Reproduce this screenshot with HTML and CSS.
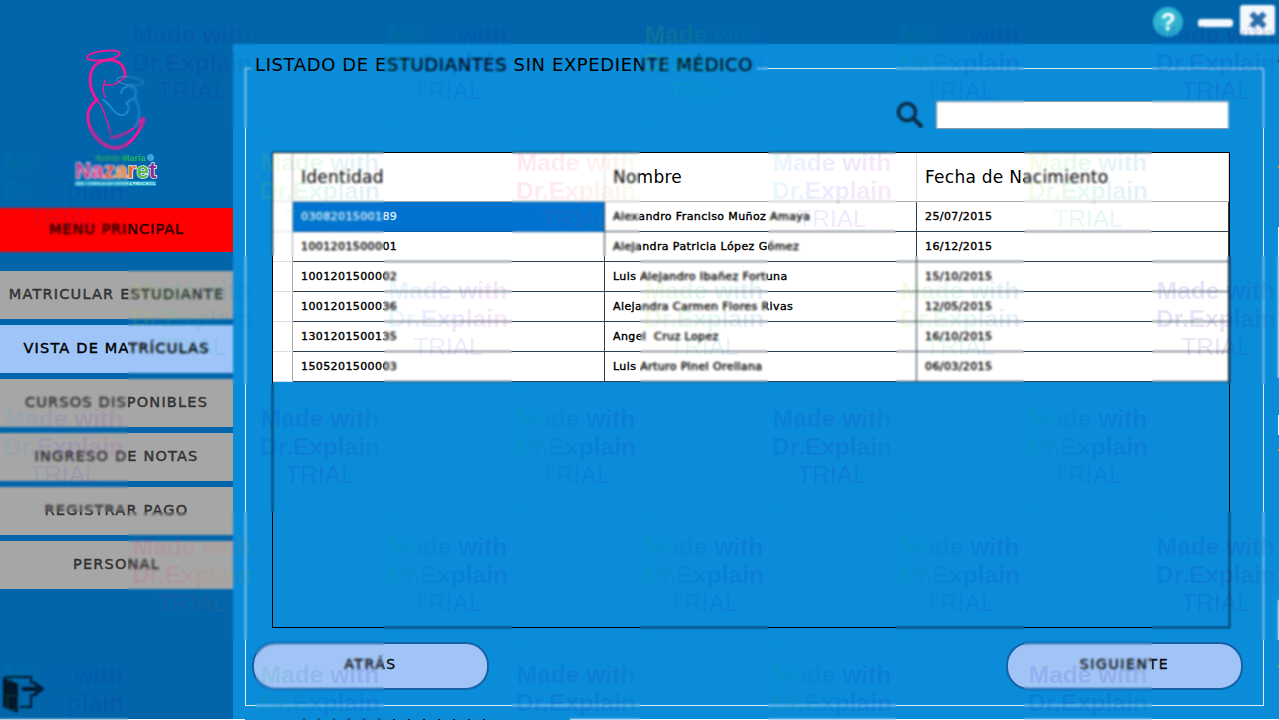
FILE: index.html
```html
<!DOCTYPE html>
<html lang="es">
<head>
<meta charset="utf-8">
<title>Listado de estudiantes sin expediente médico</title>
<link rel="stylesheet" href="styles.css">
</head>
<body>
<div class="app">
  <header class="topbar">
    <span class="help">?</span>
    <span class="minimize"></span>
    <span class="close">
      <svg viewBox="0 0 20 20" width="20" height="20"><path d="M3.5 3.5 16.5 16.5M16.5 3.5 3.5 16.5" class="close-x"/></svg>
    </span>
  </header>
  <div class="workspace">
    <aside class="sidebar">
      <svg class="logo" viewBox="70 45 95 145" width="95" height="145">
        <g class="logo-pink">
          <ellipse cx="103.500" cy="55.500" rx="16.500" ry="4.600" transform="rotate(-7 103.500 55.500)" class="mid"/>
          <path d="M125 77C126 66 118 59 108 60C97 61 90 68 90 80C90 90 94 96 97 100C90 105 87 112 88 120C90 132 100 146 114 148C127 149 139 135 144 119" class="thick"/>
          <path d="M97 100C103 106 106 118 111 134" class="thin"/>
          <path d="M111 138C122 136 135 130 142 118" class="mid"/>
          <path d="M104 84C110 87 119 84 125 76" class="thin"/>
          <path d="M105 80C102 88 103 95 106 98" class="thin"/>
        </g>
        <g class="logo-blue">
          <ellipse cx="130" cy="81" rx="13.500" ry="4" transform="rotate(8 130 81)" class="hair"/>
          <path d="M121 93C122 87 130 84 134 88C138 92 136 99 130 100L126 104" class="mid"/>
          <path d="M103 100C110 103 113 113 120 115C126 116 130 111 128 104" class="mid"/>
          <path d="M134 98C140 104 141 118 135 127" class="mid"/>
        </g>
        <text x="95" y="161" class="logo-santa">Santa María</text>
        <circle cx="150.500" cy="157.500" r="3.500" class="logo-de"/>
        <text x="75" y="178" class="logo-name"><tspan class="l1">N</tspan><tspan class="l2">a</tspan><tspan class="l3">z</tspan><tspan class="l4">a</tspan><tspan class="l5">r</tspan><tspan class="l6">e</tspan><tspan class="l7">t</tspan></text>
        <rect x="75" y="181" width="81" height="5" class="logo-band"/>
        <text x="115.500" y="185" class="logo-tag">EARLY STIMULATION CENTER &amp; PRESCHOOL</text>
      </svg>
      <div class="menu-title">MENU PRINCIPAL</div>
      <nav class="menu">
        <a class="menu-item">MATRICULAR ESTUDIANTE</a>
        <a class="menu-item active">VISTA DE MATRÍCULAS</a>
        <a class="menu-item">CURSOS DISPONIBLES</a>
        <a class="menu-item">INGRESO DE NOTAS</a>
        <a class="menu-item">REGISTRAR PAGO</a>
        <a class="menu-item">PERSONAL</a>
      </nav>
      <svg class="exit" viewBox="0 0 46 38" width="46" height="38">
        <path d="M3 1 18 8V37L3 31Z" class="exit-door"/>
        <path d="M5 1H31V8M31 18V31H20" class="exit-frame"/>
        <path d="M22 13H38" class="exit-arrow"/>
        <path d="M33 6 42 13 33 20" class="exit-head"/>
      </svg>
    </aside>
    <main class="panel">
      <fieldset class="group">
        <legend class="group-title">LISTADO DE ESTUDIANTES SIN EXPEDIENTE MÉDICO</legend>
        <div class="group-body">
          <div class="search">
            <svg viewBox="0 0 28 28" width="28" height="28"><circle cx="11" cy="11" r="8.500" class="lens"/><path d="M17 17 26 26" class="lens-handle"/></svg>
            <input class="search-input" type="text" aria-label="Buscar">
          </div>
          <div class="frame">
            <table class="grid">
              <thead>
                <tr><th class="stub"></th><th>Identidad</th><th>Nombre</th><th>Fecha de Nacimiento</th></tr>
              </thead>
              <tbody>
                <tr><td class="stub"></td><td class="selected">0308201500189</td><td>Alexandro Franciso Muñoz Amaya</td><td>25/07/2015</td></tr>
                <tr><td class="stub"></td><td>1001201500001</td><td>Alejandra Patricia López Gómez</td><td>16/12/2015</td></tr>
                <tr><td class="stub"></td><td>1001201500002</td><td>Luis Alejandro Ibañez Fortuna</td><td>15/10/2015</td></tr>
                <tr><td class="stub"></td><td>1001201500036</td><td>Alejandra Carmen Flores Rivas</td><td>12/05/2015</td></tr>
                <tr><td class="stub"></td><td>1301201500135</td><td>Angel&nbsp; Cruz Lopez</td><td>16/10/2015</td></tr>
                <tr><td class="stub"></td><td>1505201500003</td><td>Luis Arturo Pinel Orellana</td><td>06/03/2015</td></tr>
              </tbody>
            </table>
          </div>
          <div class="actions">
            <button class="action">ATRÁS</button>
            <button class="action">SIGUIENTE</button>
          </div>
        </div>
      </fieldset>
    </main>
    <div class="edge"></div>
  </div>
  <div class="strip"><span class="strip-a"></span><span class="strip-b"></span><span class="strip-c"></span></div>
</div>

<div class="watermarks" aria-hidden="true">
  <div class="wm-row odd">
    <div class="tile"><div class="mark g2">Made with<br>Dr.Explain<br><span>TRIAL</span></div></div>
    <div class="tile"><div class="mark g1">Made with<br>Dr.Explain<br><span>TRIAL</span></div></div>
    <div class="tile"><div class="mark g3">Made with<br>Dr.Explain<br><span>TRIAL</span></div></div>
    <div class="tile"><div class="mark g1">Made with<br>Dr.Explain<br><span>TRIAL</span></div></div>
    <div class="tile"><div class="mark g2">Made with<br>Dr.Explain<br><span>TRIAL</span></div></div>
  </div>
  <div class="wm-row">
    <div class="tile"><div class="mark g1">Made with<br>Dr.Explain<br><span>TRIAL</span></div></div>
    <div class="tile"><div class="mark g3">Made with<br>Dr.Explain<br><span>TRIAL</span></div></div>
    <div class="tile"><div class="mark g4">Made with<br>Dr.Explain<br><span>TRIAL</span></div></div>
    <div class="tile"><div class="mark g5">Made with<br>Dr.Explain<br><span>TRIAL</span></div></div>
    <div class="tile"><div class="mark g3">Made with<br>Dr.Explain<br><span>TRIAL</span></div></div>
  </div>
  <div class="wm-row odd">
    <div class="tile"><div class="mark g3">Made with<br>Dr.Explain<br><span>TRIAL</span></div></div>
    <div class="tile"><div class="mark g5">Made with<br>Dr.Explain<br><span>TRIAL</span></div></div>
    <div class="tile"><div class="mark g3">Made with<br>Dr.Explain<br><span>TRIAL</span></div></div>
    <div class="tile"><div class="mark g3">Made with<br>Dr.Explain<br><span>TRIAL</span></div></div>
    <div class="tile"><div class="mark g2">Made with<br>Dr.Explain<br><span>TRIAL</span></div></div>
  </div>
  <div class="wm-row">
    <div class="tile"><div class="mark g5">Made with<br>Dr.Explain<br><span>TRIAL</span></div></div>
    <div class="tile"><div class="mark g2">Made with<br>Dr.Explain<br><span>TRIAL</span></div></div>
    <div class="tile"><div class="mark g1">Made with<br>Dr.Explain<br><span>TRIAL</span></div></div>
    <div class="tile"><div class="mark g2">Made with<br>Dr.Explain<br><span>TRIAL</span></div></div>
    <div class="tile"><div class="mark g1">Made with<br>Dr.Explain<br><span>TRIAL</span></div></div>
  </div>
  <div class="wm-row odd">
    <div class="tile"><div class="mark g4">Made with<br>Dr.Explain<br><span>TRIAL</span></div></div>
    <div class="tile"><div class="mark g1">Made with<br>Dr.Explain<br><span>TRIAL</span></div></div>
    <div class="tile"><div class="mark g1">Made with<br>Dr.Explain<br><span>TRIAL</span></div></div>
    <div class="tile"><div class="mark g1">Made with<br>Dr.Explain<br><span>TRIAL</span></div></div>
    <div class="tile"><div class="mark g2">Made with<br>Dr.Explain<br><span>TRIAL</span></div></div>
  </div>
  <div class="wm-row">
    <div class="tile"><div class="mark g1">Made with<br>Dr.Explain<br><span>TRIAL</span></div></div>
    <div class="tile"><div class="mark g1">Made with<br>Dr.Explain<br><span>TRIAL</span></div></div>
    <div class="tile"><div class="mark g2">Made with<br>Dr.Explain<br><span>TRIAL</span></div></div>
    <div class="tile"><div class="mark g1">Made with<br>Dr.Explain<br><span>TRIAL</span></div></div>
    <div class="tile"><div class="mark g2">Made with<br>Dr.Explain<br><span>TRIAL</span></div></div>
  </div>
</div>
</body>
</html>
```
FILE: styles.css
```css
* { box-sizing: border-box; }
html, body { margin: 0; width: 1279px; height: 720px; overflow: hidden; }
body { position: relative; background: #0065ab; font-family: "DejaVu Sans", sans-serif; color: #000; }

.app { display: flex; flex-direction: column; height: 720px; }

.topbar { height: 44px; flex: none; display: flex; justify-content: flex-end; align-items: flex-start; }
.help { width: 30px; height: 30px; margin-top: 7px; border-radius: 50%; background: radial-gradient(circle at 45% 40%, #3cc4d6, #1f9fc8); color: #fff; font: 700 24px/30px "Liberation Sans", sans-serif; text-align: center; }
.minimize { width: 35px; height: 8px; margin: 19px 7px 0 15px; border-radius: 3px; background: #f4f8fd; }
.close { width: 35px; height: 30px; margin: 5px 4px 0 0; border-radius: 3px; background: #f2f7fc; display: flex; align-items: center; justify-content: center; }
.close-x { fill: none; stroke: #2a6da9; stroke-width: 6; }

.workspace { flex: 1; min-height: 0; display: flex; }

.sidebar { width: 233px; flex: none; margin-top: -44px; display: flex; flex-direction: column; position: relative; }
.logo { display: block; margin: 45px 0 0 70px; flex: none; }
.logo-pink, .logo-blue { fill: none; stroke-linecap: round; }
.logo-pink { stroke: #ec1a96; }
.logo-blue { stroke: #1b8ad0; }
.thick { stroke-width: 3; }
.mid { stroke-width: 2; }
.thin { stroke-width: 1.400; }
.logo-blue .hair { stroke-width: .8; stroke: #3d9bd8; }
.logo-santa { font: 700 9px "Liberation Sans", sans-serif; fill: #22b45c; }
.logo-de { fill: #3aa5dd; }
.logo-name { font: 700 22px "Liberation Sans", sans-serif; stroke: #e9f3f6; stroke-width: 1.500; paint-order: stroke; letter-spacing: .3px; }
.l1 { fill: #c5428f; }
.l2 { fill: #e33c8e; }
.l3 { fill: #e8534a; }
.l4 { fill: #f0823b; }
.l5 { fill: #f06a2a; }
.l6 { fill: #5db648; }
.l7 { fill: #93278f; }
.logo-band { fill: #13a3c9; }
.logo-tag { font: 700 3.600px "Liberation Sans", sans-serif; fill: #d8f2f7; text-anchor: middle; }

.menu-title { flex: none; height: 44px; margin-top: 18px; background: #ff0000; color: #2b0000; font: 400 14.500px/43px "DejaVu Sans", sans-serif; -webkit-text-stroke: .45px currentColor; letter-spacing: .95px; text-align: center; }
.menu { flex: none; margin-top: 19px; display: flex; flex-direction: column; gap: 6px; }
.menu-item { height: 48px; background: #a6a6a6; color: #333; font: 400 14.500px/46px "DejaVu Sans", sans-serif; -webkit-text-stroke: .45px currentColor; text-align: center; letter-spacing: 1.2px; }
.menu-item.active { background: #9fc5f8; color: #000; }

.exit { position: absolute; left: 0; top: 676px; }
.exit-door { fill: #04172a; }
.exit-frame { fill: none; stroke: #04172a; stroke-width: 2; }
.exit-arrow { fill: none; stroke: #04172a; stroke-width: 4; }
.exit-head { fill: none; stroke: #04172a; stroke-width: 3; }

.panel { width: 1045px; flex: none; background: #0a8cd9; padding: 10px 14px 13px 12px; }
.edge { width: 1px; flex: none; background: linear-gradient(180deg, #0a8cd9 0 16px, #111 16px 18px, #0a8cd9 18px 122px, #f5a100 122px 124px, #0a8cd9 124px 183px, #e9f3fa 183px 334px, #0a8cd9 334px 371px, #e9f3fa 371px 391px, #0a8cd9 391px 405px, #f5a100 405px 407px, #0a8cd9 407px 556px, #e9f3fa 556px 596px, #0a8cd9 596px 621px, #35d03a 621px 623px, #0a8cd9 623px); }

.group { display: block; width: 1019px; height: 652px; margin: 0; padding: 0; border: 1px solid #dcecf8; min-width: 0; }
.group-title { margin-left: 5px; padding: 0 4px 6px; font: 400 18px/22px "DejaVu Sans", sans-serif; color: #000; letter-spacing: .6px; }
.group-body { padding: 19px 20px 0 6px; }

.search { height: 28px; display: flex; justify-content: flex-end; align-items: center; gap: 12px; margin-right: 14px; }
.lens { fill: none; stroke: #0b2a45; stroke-width: 3.500; }
.lens-handle { fill: none; stroke: #0b2a45; stroke-width: 4; }
.search-input { width: 293px; height: 28px; border: 1px solid #8a9ba8; background: #fff; padding: 0; margin: 0; }

.frame { margin: 23px 13px 0 20px; height: 476px; border: 1px solid #000; }
.grid { width: 956px; table-layout: fixed; border-collapse: separate; border-spacing: 0; background: #fff; }
.grid th { height: 49px; padding: 0 0 0 8px; text-align: left; font: 400 17px/22px "DejaVu Sans", sans-serif; letter-spacing: .25px; color: #000; border-right: 1px solid #ddd; border-bottom: 1px solid #aaa; }
.grid td { height: 30px; padding: 0 0 0 8px; font: 400 11px/16px "DejaVu Sans", sans-serif; letter-spacing: .4px; -webkit-text-stroke: .4px currentColor; color: #000; border-right: 1px solid #2c3e50; border-bottom: 1px solid #2c3e50; white-space: nowrap; overflow: hidden; }
.grid .stub { width: 20px; padding: 0; border-right: 1px solid #aaa; border-bottom-color: #ddd; }
.grid td.selected { background: #0073d1; color: #d5e6f6; border-bottom-color: #0a5ba0; }

.actions { display: flex; justify-content: space-between; margin-top: 14px; }
.action { width: 237px; height: 48px; border: 2px solid #1462a8; border-radius: 23px; background: #a1c4f6; color: #111; font: 400 14px/20px "DejaVu Sans", sans-serif; -webkit-text-stroke: .4px currentColor; letter-spacing: 1.6px; padding: 0 0 4px; }

.strip { height: 1px; flex: none; display: flex; }
.strip-a { width: 245px; background: #fff; }
.strip-b { width: 325px; background: linear-gradient(90deg, #0a8cd9 0 55px, transparent 55px 240px, #0a8cd9 240px), repeating-linear-gradient(90deg, #0a8cd9 0 13px, #111 13px 15px); }
.strip-c { flex: 1; background: #fff; }

.watermarks { position: absolute; left: 0; top: 0; width: 1279px; height: 720px; overflow: hidden; pointer-events: none; }
.wm-row { display: flex; gap: 128px; height: 128px; }
.wm-row.odd { padding-left: 128px; }
.tile { width: 128px; height: 128px; flex: none; padding-top: 21px; backdrop-filter: blur(.8px); }
.mark { font: 700 24.500px/28px "Liberation Sans", sans-serif; text-align: center; white-space: nowrap; color: transparent; -webkit-background-clip: text; background-clip: text; }
.mark span { font-weight: 400; }
.g1 { background-image: linear-gradient(100deg, rgba(0,190,90,.11), rgba(0,40,210,.11) 60%, rgba(70,0,190,.11)); }
.g2 { background-image: linear-gradient(100deg, rgba(0,40,210,.11), rgba(60,0,160,.11) 60%, rgba(0,110,110,.11)); }
.g3 { background-image: linear-gradient(100deg, rgba(190,240,0,.1), rgba(0,210,110,.1) 45%, rgba(0,80,240,.1)); }
.g4 { background-image: linear-gradient(100deg, rgba(255,0,150,.1), rgba(255,60,60,.08) 55%, rgba(190,230,0,.08)); }
.g5 { background-image: linear-gradient(100deg, rgba(0,210,240,.09), rgba(70,0,240,.09) 55%, rgba(255,0,150,.09)); }
```
